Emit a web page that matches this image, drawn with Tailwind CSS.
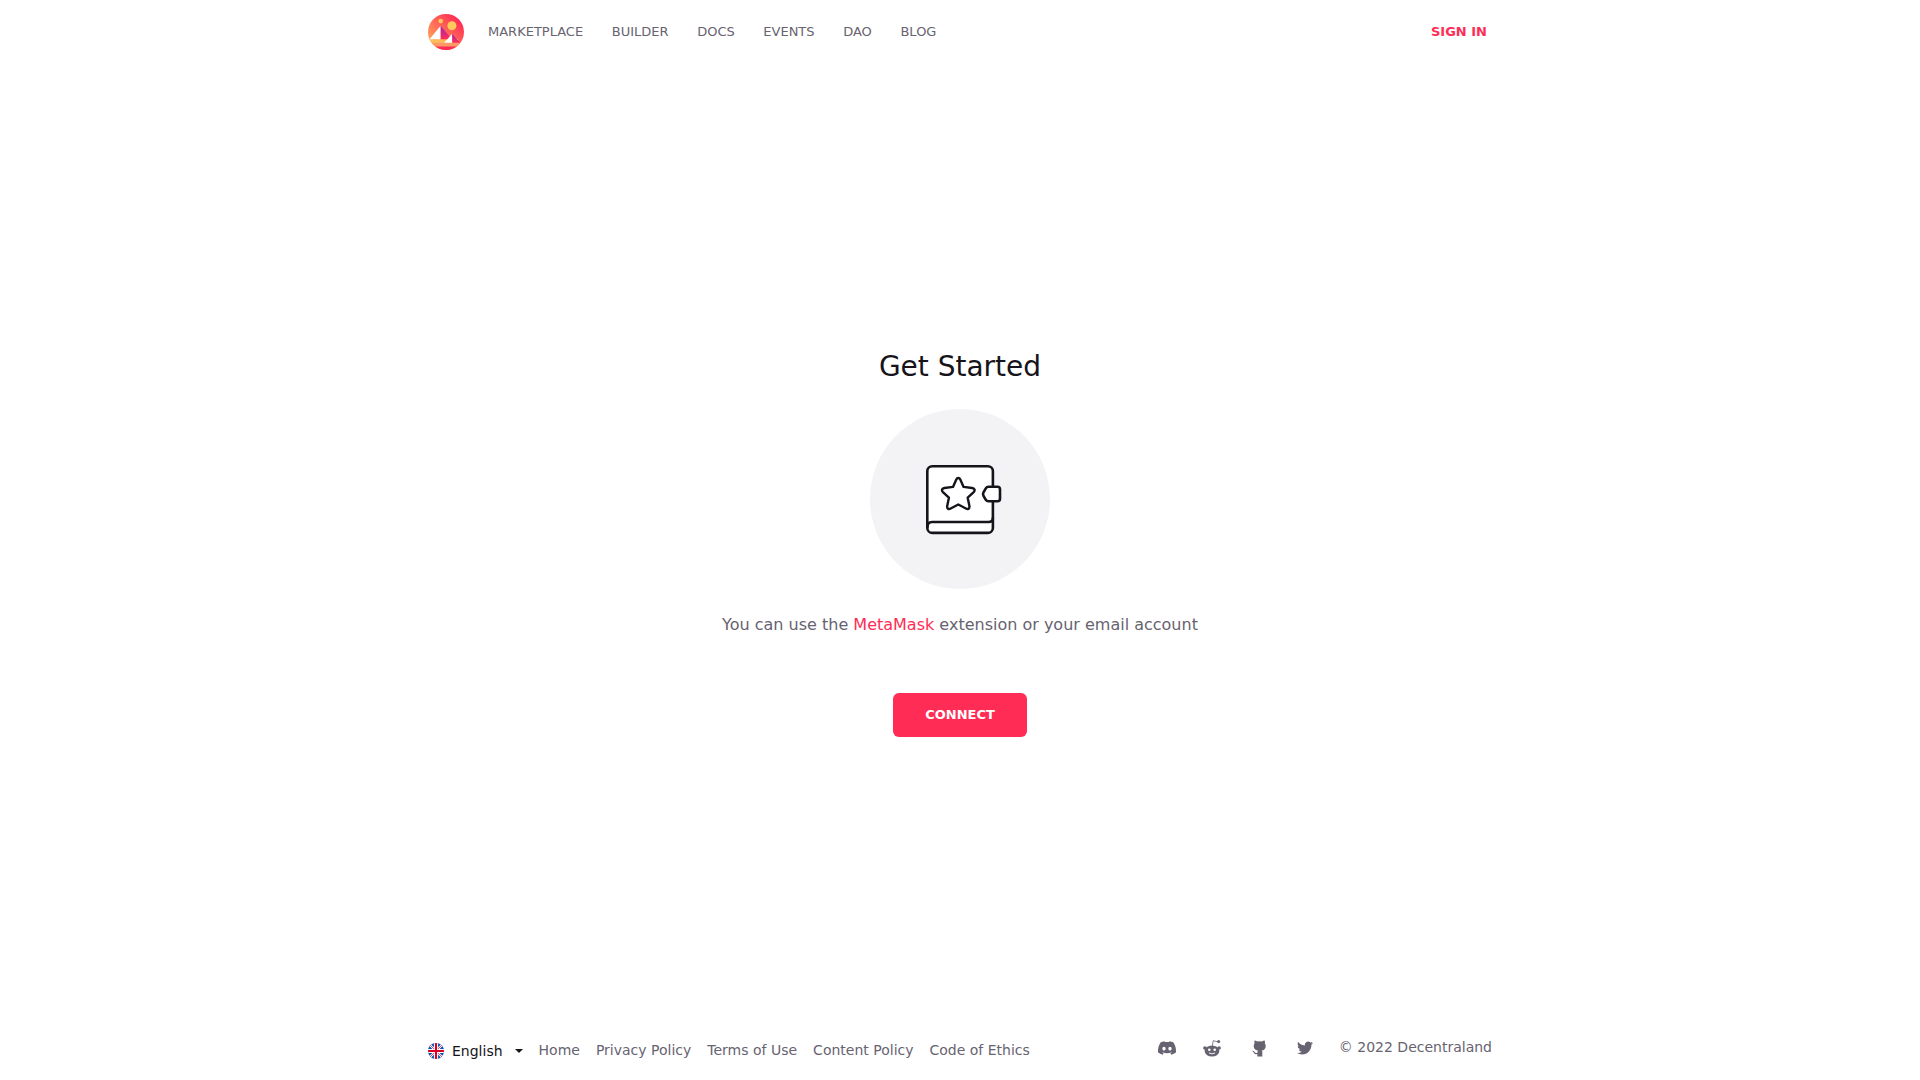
<!DOCTYPE html>
<html lang="en">
<head>
<meta charset="utf-8">
<title>Decentraland</title>
<script src="https://cdn.jsdelivr.net/npm/@tailwindcss/browser@4"></script>
</head>
<body class="bg-white font-['DejaVu_Sans',sans-serif] text-[#676370]">
<div class="mx-auto flex h-screen w-[1064px] flex-col overflow-hidden">
  <header class="flex h-16 shrink-0 items-center text-[13px]">
    <svg class="size-9 shrink-0" viewBox="0 0 36 36">
      <defs>
        <linearGradient id="sky" x1="1" y1="0" x2="0" y2="1"><stop offset="0.15" stop-color="#ff2d55"/><stop offset="1" stop-color="#ffbc5b"/></linearGradient>
        <linearGradient id="peak" x1="0" y1="0" x2="0" y2="1"><stop offset="0" stop-color="#a524b3"/><stop offset="1" stop-color="#ff2d55"/></linearGradient>
        <clipPath id="disc"><circle cx="18" cy="18" r="18"/></clipPath>
      </defs>
      <g clip-path="url(#disc)">
        <path fill="url(#sky)" d="M0 0h36v36H0z"/>
        <path fill="#ffbc5b" d="M0 25.2h30V29H0z"/>
        <path fill="#fc9965" d="M0 28.8h36v4H0z"/>
        <path fill="#ff2d55" d="M0 32.4h36V36H0z"/>
        <path fill="#fff" d="M12.7 11.7v13.5H1.5z"/>
        <path fill="url(#peak)" d="M12.7 11.7 24 25.2H12.7z"/>
        <path fill="#fff" d="M24.2 19.8v9h-8z"/>
        <path fill="url(#peak)" d="m24.2 19.8 7.8 9h-7.8z"/>
        <circle cx="23.9" cy="11.7" r="4.5" fill="#ffc95b"/>
        <circle cx="12.7" cy="7.1" r="2.3" fill="#ffc95b"/>
      </g>
    </svg>
    <nav class="ml-6 flex gap-[28.6px]">
      <a>MARKETPLACE</a><a>BUILDER</a><a>DOCS</a><a>EVENTS</a><a>DAO</a><a>BLOG</a>
    </nav>
    <a class="mr-[5px] ml-auto font-bold text-[#ff2d55]">SIGN IN</a>
  </header>

  <main class="flex grow flex-col items-center pt-[285px]">
    <h1 class="text-[28px] leading-9 text-[#16141a]">Get Started</h1>
    <svg class="mt-6 size-[180px] shrink-0" viewBox="0 0 180 180" fill="#fff" stroke="#16141a" stroke-width="2.6" stroke-linejoin="round" stroke-linecap="round">
      <circle cx="90" cy="90" r="90" fill="#f3f2f5" stroke="none"/>
      <rect x="57.3" y="57.2" width="65.6" height="66.7" rx="5"/>
      <path fill="none" d="M57.5 118c0-3 1.500-5 4.500-5h56.500c3 0 4.400-1 4.400-4"/>
      <path d="M118.500 77.800h9c1.700 0 2.500.8 2.500 2.500v9.500c0 1.700-.8 2.500-2.500 2.500h-9c-1.400 0-2-.4-2.700-1.500l-2.300-4c-.7-1.200-.7-2.200 0-3.400l2.300-4c.7-1.200 1.300-1.600 2.700-1.600z"/>
      <path stroke-width="2.400" d="M86.300 70.500c.9-2 3.100-2 4 0l3.300 7.400 8.500 1.100c2.500.3 3.300 2.400 1.600 4.100l-6 5.600 1.700 8.300c.4 2.600-1.400 3.700-3.500 2.500l-7.600-4-7.600 4c-2.100 1.200-3.900.1-3.500-2.500l1.700-8.300-6-5.600c-1.700-1.700-.9-3.800 1.600-4.100l8.500-1.100z"/>
    </svg>
    <p class="mt-6 text-base leading-6">You can use the <a class="text-[#ff2d55]">MetaMask</a> extension or your email account</p>
    <button class="mt-14 h-11 w-[134px] rounded-md bg-[#ff2d55] text-[13px] font-bold text-white">CONNECT</button>
  </main>

  <footer class="flex h-[60px] shrink-0 items-center text-sm">
    <div class="flex items-center pt-0.5 text-[#16141a]">
      <svg class="size-4" viewBox="0 0 16 16">
        <clipPath id="flag"><circle cx="8" cy="8" r="8"/></clipPath>
        <g clip-path="url(#flag)">
          <path fill="#0052b4" d="M0 0h16v16H0z"/>
          <path stroke="#fff" stroke-width="2.200" d="m0 0 16 16M16 0 0 16"/>
          <path stroke="#d80027" stroke-width=".7" d="m0 0 16 16M16 0 0 16"/>
          <path stroke="#fff" stroke-width="4.200" d="M8 0v16M0 8h16"/>
          <path stroke="#d80027" stroke-width="2.100" d="M8 0v16M0 8h16"/>
        </g>
      </svg>
      <span class="ml-2">English</span>
      <svg class="ml-3 h-1 w-2" viewBox="0 0 8 4"><path fill="#16141a" d="M0 0h8L4 4z"/></svg>
    </div>
    <nav class="ml-4 flex gap-4">
      <a>Home</a><a>Privacy Policy</a><a>Terms of Use</a><a>Content Policy</a><a>Code of Ethics</a>
    </nav>
    <div class="ml-auto flex items-center pb-1.5">
      <svg class="mt-0.5 mr-[27px] size-[18px]" viewBox="0 0 24 24" fill="#676370"><path d="M20.317 4.370a19.791 19.791 0 0 0-4.885-1.515.074.074 0 0 0-.079.037c-.210.375-.444.864-.608 1.250a18.270 18.270 0 0 0-5.487 0 12.640 12.640 0 0 0-.617-1.250.077.077 0 0 0-.079-.037A19.736 19.736 0 0 0 3.677 4.370a.070.070 0 0 0-.032.027C.533 9.046-.320 13.580.099 18.058a.082.082 0 0 0 .031.057 19.900 19.900 0 0 0 5.993 3.030.078.078 0 0 0 .084-.028c.462-.630.874-1.295 1.226-1.994a.076.076 0 0 0-.042-.106 13.107 13.107 0 0 1-1.872-.892.077.077 0 0 1-.008-.128l.372-.292a.074.074 0 0 1 .078-.010c3.928 1.793 8.180 1.793 12.062 0a.074.074 0 0 1 .079.010l.373.292a.077.077 0 0 1-.007.128 12.299 12.299 0 0 1-1.873.892.077.077 0 0 0-.041.106c.360.699.772 1.364 1.225 1.994a.076.076 0 0 0 .084.028 19.839 19.839 0 0 0 6.002-3.030.077.077 0 0 0 .032-.057c.500-5.177-.838-9.674-3.549-13.660a.061.061 0 0 0-.031-.028zM8.020 15.330c-1.183 0-2.157-1.085-2.157-2.419s.955-2.419 2.157-2.419c1.210 0 2.176 1.096 2.157 2.420 0 1.333-.956 2.418-2.157 2.418zm7.975 0c-1.183 0-2.157-1.085-2.157-2.419s.955-2.419 2.157-2.419c1.210 0 2.176 1.096 2.157 2.420 0 1.333-.946 2.418-2.157 2.418z"/></svg>
      <svg class="mt-0.5 mr-[31px] size-[18px]" viewBox="0 0 18 18"><ellipse cx="9" cy="12" rx="7.400" ry="5.600" fill="#676370"/><circle cx="1.900" cy="9" r="1.800" fill="#676370"/><circle cx="16.100" cy="9" r="1.800" fill="#676370"/><path d="m9.400 7 .8-5.300 4.800 1.200" fill="none" stroke="#676370" stroke-width=".8"/><circle cx="15.700" cy="2.400" r="1.500" fill="#676370"/><circle cx="6.300" cy="10.700" r="1.300" fill="#fff"/><circle cx="11.700" cy="10.700" r="1.300" fill="#fff"/><path d="M6 14q3 1.600 6 0" fill="none" stroke="#fff" stroke-width=".9"/></svg>
      <svg class="mt-0.5 mr-[31px] h-[17px] w-[14px]" viewBox="0 0 14 17"><path fill="#676370" d="M2.500.500c1 0 2 .4 2.900 1a12 12 0 0 1 4.400 0c.9-.6 1.900-1 2.900-1 .4 1 .4 2 .1 2.800.6.700.9 1.600.9 2.700 0 3-1.700 4.200-4 4.600.4.500.6 1 .6 1.700V16.500H5.300v-2.400c-2 .3-3-.4-3.700-1.700C1.200 11.600.7 11.200.2 11c.8-.4 1.700.1 2.300.9.700 1 1.400 1.300 2.800 1 0-.9.300-1.700.7-2.300-2.400-.4-4.300-1.600-4.300-4.600 0-1.100.3-2 .9-2.700-.3-.9-.3-1.800-.1-2.800z"/></svg>
      <svg class="mt-0.5 mr-[26px] size-4" viewBox="0 0 24 24" fill="#676370"><path d="M23.953 4.570a10 10 0 0 1-2.825.775 4.958 4.958 0 0 0 2.163-2.723c-.951.555-2.005.959-3.127 1.184a4.920 4.920 0 0 0-8.384 4.482C7.690 8.095 4.067 6.130 1.640 3.162a4.822 4.822 0 0 0-.666 2.475c0 1.710.870 3.213 2.188 4.096a4.904 4.904 0 0 1-2.228-.616v.060a4.923 4.923 0 0 0 3.946 4.827 4.996 4.996 0 0 1-2.212.085 4.936 4.936 0 0 0 4.604 3.417 9.867 9.867 0 0 1-6.102 2.105c-.390 0-.779-.023-1.170-.067a13.995 13.995 0 0 0 7.557 2.209c9.053 0 13.998-7.496 13.998-13.985 0-.210 0-.420-.015-.630A9.935 9.935 0 0 0 24 4.590z"/></svg>
      <span>© 2022 Decentraland</span>
    </div>
  </footer>
</div>
</body>
</html>
